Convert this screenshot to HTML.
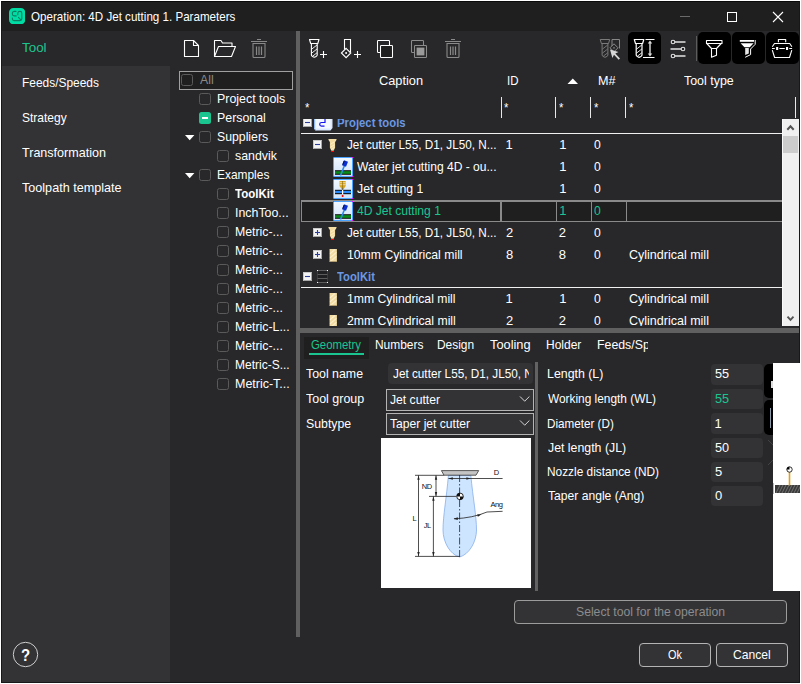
<!DOCTYPE html>
<html><head><meta charset="utf-8"><title>Operation: 4D Jet cutting 1. Parameters</title>
<style>
html,body{margin:0;padding:0;background:#fff;}
body{width:801px;height:684px;position:relative;overflow:hidden;font-family:"Liberation Sans",sans-serif;font-size:13px;}
.r{position:absolute;display:block;box-sizing:border-box;}
.t{position:absolute;display:block;white-space:nowrap;line-height:16px;transform-origin:0 50%;}
.clip{position:absolute;overflow:hidden;}
</style></head><body>
<div class="r" style="left:1px;top:1px;width:799px;height:682px;background:#28282a;"></div>
<div class="r" style="left:1px;top:1px;width:799px;height:30px;background:#1f1f1f;"></div>
<div class="r" style="left:1px;top:31px;width:169px;height:652px;background:#333335;"></div>
<div class="r" style="left:1px;top:31px;width:169px;height:35px;background:#28282a;"></div>
<svg class="r" style="left:9px;top:8px;" width="16" height="16" viewBox="0 0 16 16"><rect x="0" y="0" width="16.2" height="16.2" rx="4.4" fill="#00dca3"/>
<g fill="none" stroke="#0a7f63" stroke-width="1.1" stroke-linecap="round"><path d="M7 3.400H5.200a1.800 1.800 0 0 0-1.800 1.800v0.900a1.800 1.800 0 0 0 1.800 1.800H7.200"/><path d="M3.400 10v0.800a1.800 1.800 0 0 0 1.800 1.800h5.800a1.800 1.800 0 0 0 1.800-1.800V5.200a1.800 1.800 0 0 0-1.800-1.800h-0.400a1.800 1.800 0 0 0-1.800 1.800v1.600"/><path d="M9.500 9.300l2.100 2.300"/></g></svg>
<span class="t" style="left:31.06px;top:8.70px;color:#fff;transform:scaleX(0.8921);">Operation: 4D Jet cutting 1. Parameters</span>
<div class="r" style="left:680px;top:16px;width:10px;height:1px;background:#6a6a6a;"></div>
<div class="r" style="left:727px;top:12px;width:10px;height:10px;background:transparent;border:1px solid #fff;"></div>
<svg class="r" style="left:772px;top:11px;" width="12" height="12" viewBox="0 0 12 12"><path d="M1 1L11 11M11 1L1 11" stroke="#fff" stroke-width="1.1" fill="none"/></svg>
<span class="t" style="left:22.29px;top:39.70px;color:#1bc590;transform:scaleX(1.0308);">Tool</span>
<span class="t" style="left:21.59px;top:74.70px;color:#fff;transform:scaleX(0.9173);">Feeds/Speeds</span>
<span class="t" style="left:22.05px;top:109.70px;color:#fff;transform:scaleX(0.9226);">Strategy</span>
<span class="t" style="left:22.31px;top:144.70px;color:#fff;transform:scaleX(0.9650);">Transformation</span>
<span class="t" style="left:22.31px;top:179.70px;color:#fff;transform:scaleX(0.9695);">Toolpath template</span>
<svg class="r" style="left:12px;top:641px;" width="27" height="27" viewBox="0 0 27 27"><circle cx="13.500" cy="13.500" r="12.200" fill="none" stroke="#cdcdcd" stroke-width="1"/></svg>
<span class="t" style="left:20.51px;top:646.75px;color:#fff;font-size:16.5px;font-weight:bold;transform:scaleX(0.9073);">?</span>
<svg class="r" style="left:182px;top:38px;" width="20" height="22" viewBox="0 0 20 22"><path d="M2.500 2.500h9l5 5v11h-14zM11.500 2.500v5h5" fill="none" stroke="#fff" stroke-width="1.100" stroke-linejoin="round"/></svg>
<svg class="r" style="left:212px;top:38px;" width="26" height="22" viewBox="0 0 26 22"><path d="M2.500 18.500v-16h6.500l1.500 2.500h9.500v3.500M2.500 18.500l4-10h17l-4 10z" fill="none" stroke="#fff" stroke-width="1.100" stroke-linejoin="round"/></svg>
<svg class="r" style="left:249px;top:36px;" width="20" height="24" viewBox="0 0 20 24"><path d="M2 5.500h16M8 3.500h4M4 7.500h12v13q0 1-1 1h-10q-1 0-1-1z" fill="none" stroke="#888" stroke-width="1.100"/><path d="M7.500 10.500v8.500M10 10.500v8.500M12.500 10.500v8.500" stroke="#888" stroke-width="1.200"/></svg>
<div class="r" style="left:179px;top:71px;width:114px;height:19px;background:#1f1f1f;border:1px solid #a0a0a0;"></div>
<div class="r" style="left:181px;top:74px;width:12px;height:12px;background:transparent;border:1px solid #5a5a5a;border-radius:2.5px;"></div>
<span class="t" style="left:200.2px;top:71.70px;color:#8a8a8a;transform:scaleX(0.9412);">All</span>
<div class="r" style="left:199px;top:93px;width:12px;height:12px;background:transparent;border:1px solid #5a5a5a;border-radius:2.5px;"></div>
<span class="t" style="left:217.05px;top:90.70px;color:#fff;transform:scaleX(0.9542);">Project tools</span>
<div class="r" style="left:199px;top:112px;width:12px;height:12px;background:#1bc590;border-radius:2.5px;"></div>
<div class="r" style="left:202px;top:117px;width:6px;height:2px;background:#fff;"></div>
<span class="t" style="left:217.05px;top:109.70px;color:#fff;transform:scaleX(0.9513);">Personal</span>
<div class="r" style="left:199px;top:131px;width:12px;height:12px;background:transparent;border:1px solid #5a5a5a;border-radius:2.5px;"></div>
<span class="t" style="left:216.83px;top:128.70px;color:#fff;transform:scaleX(0.9435);">Suppliers</span>
<svg class="r" style="left:185px;top:135px;" width="10" height="6" viewBox="0 0 10 6"><path d="M0 0h9.4L4.7 5.2z" fill="#fff"/></svg>
<div class="r" style="left:217px;top:150px;width:12px;height:12px;background:transparent;border:1px solid #5a5a5a;border-radius:2.5px;"></div>
<span class="t" style="left:235.02px;top:147.70px;color:#fff;transform:scaleX(0.9519);">sandvik</span>
<div class="r" style="left:199px;top:169px;width:12px;height:12px;background:transparent;border:1px solid #5a5a5a;border-radius:2.5px;"></div>
<span class="t" style="left:217.09px;top:166.70px;color:#fff;transform:scaleX(0.9171);">Examples</span>
<svg class="r" style="left:185px;top:173px;" width="10" height="6" viewBox="0 0 10 6"><path d="M0 0h9.4L4.7 5.2z" fill="#fff"/></svg>
<div class="r" style="left:217px;top:188px;width:12px;height:12px;background:transparent;border:1px solid #5a5a5a;border-radius:2.5px;"></div>
<span class="t" style="left:235.31px;top:185.70px;color:#fff;font-weight:bold;transform:scaleX(0.8853);">ToolKit</span>
<div class="r" style="left:217px;top:207px;width:12px;height:12px;background:transparent;border:1px solid #5a5a5a;border-radius:2.5px;"></div>
<span class="t" style="left:234.96px;top:204.70px;color:#fff;transform:scaleX(0.9519);">InchToo...</span>
<div class="r" style="left:217px;top:226px;width:12px;height:12px;background:transparent;border:1px solid #5a5a5a;border-radius:2.5px;"></div>
<span class="t" style="left:235.06px;top:223.70px;color:#fff;transform:scaleX(0.9461);">Metric-...</span>
<div class="r" style="left:217px;top:245px;width:12px;height:12px;background:transparent;border:1px solid #5a5a5a;border-radius:2.5px;"></div>
<span class="t" style="left:235.06px;top:242.70px;color:#fff;transform:scaleX(0.9461);">Metric-...</span>
<div class="r" style="left:217px;top:264px;width:12px;height:12px;background:transparent;border:1px solid #5a5a5a;border-radius:2.5px;"></div>
<span class="t" style="left:235.06px;top:261.70px;color:#fff;transform:scaleX(0.9461);">Metric-...</span>
<div class="r" style="left:217px;top:283px;width:12px;height:12px;background:transparent;border:1px solid #5a5a5a;border-radius:2.5px;"></div>
<span class="t" style="left:235.06px;top:280.70px;color:#fff;transform:scaleX(0.9461);">Metric-...</span>
<div class="r" style="left:217px;top:302px;width:12px;height:12px;background:transparent;border:1px solid #5a5a5a;border-radius:2.5px;"></div>
<span class="t" style="left:235.06px;top:299.70px;color:#fff;transform:scaleX(0.9461);">Metric-...</span>
<div class="r" style="left:217px;top:321px;width:12px;height:12px;background:transparent;border:1px solid #5a5a5a;border-radius:2.5px;"></div>
<span class="t" style="left:235.06px;top:318.70px;color:#fff;transform:scaleX(0.9459);">Metric-L...</span>
<div class="r" style="left:217px;top:340px;width:12px;height:12px;background:transparent;border:1px solid #5a5a5a;border-radius:2.5px;"></div>
<span class="t" style="left:235.06px;top:337.70px;color:#fff;transform:scaleX(0.9461);">Metric-...</span>
<div class="r" style="left:217px;top:359px;width:12px;height:12px;background:transparent;border:1px solid #5a5a5a;border-radius:2.5px;"></div>
<span class="t" style="left:235.09px;top:356.70px;color:#fff;transform:scaleX(0.9227);">Metric-S...</span>
<div class="r" style="left:217px;top:378px;width:12px;height:12px;background:transparent;border:1px solid #5a5a5a;border-radius:2.5px;"></div>
<span class="t" style="left:235.04px;top:375.70px;color:#fff;transform:scaleX(0.9598);">Metric-T...</span>
<div class="r" style="left:296px;top:31px;width:4px;height:606px;background:#606060;"></div>
<svg class="r" style="left:300px;top:32px;" width="34" height="32" viewBox="0 0 34 32"><g transform="translate(9,7)" fill="none" stroke="#fff" stroke-width="1.1" stroke-linejoin="round"><path d="M0.5 0.5h9.5l-1.200 4h-7.100zM2.400 4.500v11.600q0 1.400 2.900 2.200q2.900-0.800 2.900-2.200v-11.600"/><path d="M2.600 10.200l5.400-4.200M2.600 14.200l5.400-4.200M3.600 17.200l4.400-3.400" stroke-width="0.9"/></g><path d="M20.0 22.5h7M23.5 19.0v7" stroke="#fff" stroke-width="1.1" fill="none"/></svg>
<svg class="r" style="left:334px;top:32px;" width="34" height="32" viewBox="0 0 34 32"><g fill="none" stroke="#fff" stroke-width="1.1"><path d="M10.5 17.500v-10h6v12.500"/><path d="M12.1 16.300l4.700 4.700-4.700 4.700-4.700-4.700z"/><circle cx="12.1" cy="21" r="1" fill="#fff" stroke="none"/></g><path d="M20.0 22.5h7M23.5 19.0v7" stroke="#fff" stroke-width="1.1" fill="none"/></svg>
<svg class="r" style="left:374px;top:38px;" width="22" height="22" viewBox="0 0 22 22"><g fill="#28282a" stroke="#fff" stroke-width="1.05"><rect x="3.5" y="2.5" width="12" height="12" rx="0.8"/><rect x="6.5" y="7.5" width="12" height="12" rx="0.8" fill="#1f1f1f"/></g></svg>
<svg class="r" style="left:408px;top:38px;" width="22" height="22" viewBox="0 0 22 22"><g fill="#28282a" stroke="#8c8c8c" stroke-width="1.05"><rect x="3.5" y="2.5" width="12" height="12" rx="0.8"/><rect x="6.5" y="7.5" width="12" height="12" rx="0.8"/><rect x="8.6" y="9.6" width="7.8" height="7.8" fill="#9a9a9a" stroke="none"/></g></svg>
<svg class="r" style="left:443px;top:36px;" width="20" height="24" viewBox="0 0 20 24"><path d="M2 5.500h16M8 3.500h4M4 7.500h12v13q0 1-1 1h-10q-1 0-1-1z" fill="none" stroke="#8a8a8a" stroke-width="1.100"/><path d="M7.500 10.500v8.500M10 10.500v8.500M12.500 10.500v8.500" stroke="#8a8a8a" stroke-width="1.200"/></svg>
<svg class="r" style="left:596px;top:32px;" width="30" height="32" viewBox="0 0 30 32"><g transform="translate(3.7,7)" fill="none" stroke="#7a7a7a" stroke-width="1.0" stroke-linejoin="round"><path d="M0.5 0.5h9.5l-1.200 4h-7.100zM2.400 4.500v11.600q0 1.400 2.900 2.200q2.900-0.800 2.900-2.200v-11.600"/><path d="M2.600 10.200l5.400-4.200M2.600 14.200l5.400-4.200M3.600 17.200l4.400-3.400" stroke-width="0.9"/></g><g fill="none" stroke="#888" stroke-width="1"><path d="M16 14v-6.5h7.5v9"/><path d="M18 11.8l4 4-4 4-4-4z"/><circle cx="18" cy="15.8" r="0.9" fill="#7a7a7a" stroke="none"/></g><path d="M14 17.5l8.5 2.6-3.2 1.5 4.7 5-1.3 1.2-4.7-5-1.6 3.2z" fill="#d6d6d6"/></svg>
<div class="r" style="left:628px;top:32px;width:33px;height:32px;background:#000;border-radius:5px;"></div>
<svg class="r" style="left:628px;top:32px;" width="33" height="32" viewBox="0 0 33 32"><g transform="translate(5.8,7)" fill="none" stroke="#fff" stroke-width="1.2" stroke-linejoin="round"><path d="M0.5 0.5h9.5l-1.200 4h-7.100zM2.400 4.500v11.600q0 1.400 2.900 2.200q2.900-0.800 2.900-2.200v-11.600"/><path d="M2.600 10.200l5.400-4.200M2.600 14.200l5.400-4.200M3.600 17.200l4.400-3.400" stroke-width="0.9"/></g><g stroke="#fff" stroke-width="1.1" fill="none"><path d="M17.5 7.5h9M15 25.5h11.5"/><path d="M22 11v11.5" stroke="#b0b0b0" stroke-width="1.8"/><path d="M22 8.6l2.2 3h-4.4zM22 24.4l2.2-3h-4.4z" fill="#ddd" stroke="none"/></g></svg>
<svg class="r" style="left:666px;top:36px;" width="28" height="26" viewBox="0 0 28 26"><g stroke="#b4b4b4" stroke-width="1.8"><path d="M9 6h10.5M4.5 13h10.5M9 20h10.5"/></g><g fill="#28282a" stroke="#e4e4e4" stroke-width="1.1"><circle cx="7" cy="6" r="1.8"/><circle cx="17" cy="13" r="1.8"/><circle cx="7" cy="20" r="1.8"/></g></svg>
<div class="r" style="left:696px;top:36px;width:1px;height:25px;background:#5c5c5c;"></div>
<div class="r" style="left:698px;top:32px;width:33px;height:32px;background:#000;border-radius:5px;"></div>
<svg class="r" style="left:698px;top:32px;" width="33" height="32" viewBox="0 0 33 32"><path d="M8.500 8.500h15.500v3h-15.500zM8.800 11.500l4.700 5v8.800l5-2v-6.800l4.700-5M13.500 16.500h5" fill="none" stroke="#fff" stroke-width="1.100" stroke-linejoin="round"/></svg>
<div class="r" style="left:732px;top:32px;width:33px;height:32px;background:#000;border-radius:5px;"></div>
<svg class="r" style="left:732px;top:32px;" width="33" height="32" viewBox="0 0 33 32"><path d="M7.800 8h14.200v1.800h-14.200z" fill="#fff"/><path d="M8.600 11.200h13l-3.800 4h-5.300z" fill="#fff"/><path d="M13.200 16h3.600v5.600l-3.600 1.400z" fill="#e8e8e8"/><path d="M23.200 8v4.300l-4.600 4.700v5.600l-5.400 2.700" fill="none" stroke="#fff" stroke-width="1"/></svg>
<div class="r" style="left:766px;top:32px;width:33px;height:32px;background:#000;border-radius:5px;"></div>
<svg class="r" style="left:766px;top:32px;" width="33" height="32" viewBox="0 0 33 32"><g fill="none" stroke="#fff" stroke-width="1.100" stroke-linejoin="round"><path d="M12.400 10.200v-2.700h7.300v2.700"/><path d="M6.300 14.800l2.200-3.300h15.200l2.200 3.300"/><path d="M6.300 18.200l2.300 7.300h14.900l2.300-7.300"/><path d="M6 16.500h2.800M13.400 16.500h5.400M23.300 16.500h2.800"/></g><rect x="10.100" y="15" width="2.100" height="3" fill="#fff"/><rect x="20" y="15" width="2.100" height="3" fill="#fff"/></svg>
<span class="t" style="left:378.71px;top:72.70px;color:#fff;transform:scaleX(0.9838);">Caption</span>
<span class="t" style="left:507.24px;top:72.70px;color:#fff;transform:scaleX(0.8839);">ID</span>
<svg class="r" style="left:567px;top:78px;" width="12" height="7" viewBox="0 0 12 7"><path d="M0.5 6L5.8 0.6 11 6z" fill="#fff"/></svg>
<span class="t" style="left:597.53px;top:72.70px;color:#fff;transform:scaleX(0.9704);">M#</span>
<span class="t" style="left:684.31px;top:72.70px;color:#fff;transform:scaleX(0.9551);">Tool type</span>
<div class="r" style="left:501px;top:97px;width:1px;height:21px;background:#e8e8e8;"></div>
<div class="r" style="left:555px;top:97px;width:1px;height:21px;background:#e8e8e8;"></div>
<div class="r" style="left:590px;top:97px;width:1px;height:21px;background:#e8e8e8;"></div>
<div class="r" style="left:625px;top:97px;width:1px;height:21px;background:#e8e8e8;"></div>
<div class="r" style="left:795px;top:97px;width:1px;height:21px;background:#e8e8e8;"></div>
<span class="t" style="left:304.63px;top:99.70px;color:#fff;transform:scaleX(0.8696);">*</span>
<span class="t" style="left:503.63px;top:99.70px;color:#fff;transform:scaleX(0.8696);">*</span>
<span class="t" style="left:558.63px;top:99.70px;color:#fff;transform:scaleX(0.8696);">*</span>
<span class="t" style="left:593.63px;top:99.70px;color:#fff;transform:scaleX(0.8696);">*</span>
<span class="t" style="left:628.63px;top:99.70px;color:#fff;transform:scaleX(0.8696);">*</span>
<div class="clip" style="left:301px;top:119px;width:481px;height:207px;">
<svg class="r" style="left:2px;top:-1px;" width="9" height="9" viewBox="0 0 9 9"><rect x="0" y="0" width="9" height="9" fill="#c9c9c9"/><rect x="1" y="1" width="7" height="7" fill="#f4f4f4"/><path d="M0.500 8.500h8v-8" stroke="#a8a8a8" fill="none"/><path d="M2 4.500h5" stroke="#2e3f9a" stroke-width="1.100"/></svg>
<svg class="r" style="left:12px;top:-2px;" width="20" height="14" viewBox="0 0 20 14"><path d="M1 0h18.500v11l-2 2.500h-15l-1.500-2z" fill="#dbe9ff"/><path d="M3 0h14.500v11.500h-14.500z" fill="#f4f8ff"/><path d="M1.500 0v11.500l1.500 2" stroke="#8fb8f5" fill="none"/><path d="M12 2v3.500h-3.500q-1.800 0-1.800 1.800t1.800 1.800h3" fill="none" stroke="#1414f0" stroke-width="1.200"/></svg>
<span class="t" style="left:35.92px;top:-4.30px;color:#6a98e4;font-weight:bold;transform:scaleX(0.8719);">Project tools</span>
<div class="r" style="left:0px;top:13.699999999999989px;width:481px;height:1.8px;background:#f0f0f0;"></div>
<div class="r" style="left:0px;top:81px;width:481px;height:22px;background:#1f1f1f;"></div>
<div class="r" style="left:0px;top:81px;width:481px;height:1.5px;background:#8a8a8a;"></div>
<div class="r" style="left:0px;top:101.5px;width:481px;height:1.5px;background:#8a8a8a;"></div>
<div class="r" style="left:0px;top:81px;width:1px;height:22px;background:#8a8a8a;"></div>
<div class="r" style="left:199.2px;top:81px;width:1.6px;height:22px;background:#8a8a8a;"></div>
<div class="r" style="left:254.79999999999995px;top:81px;width:1.6px;height:22px;background:#8a8a8a;"></div>
<div class="r" style="left:289.6px;top:81px;width:1.6px;height:22px;background:#8a8a8a;"></div>
<div class="r" style="left:324.6px;top:81px;width:1.6px;height:22px;background:#8a8a8a;"></div>
<svg class="r" style="left:12px;top:21px;" width="9" height="9" viewBox="0 0 9 9"><rect x="0" y="0" width="9" height="9" fill="#c9c9c9"/><rect x="1" y="1" width="7" height="7" fill="#f4f4f4"/><path d="M0.500 8.500h8v-8" stroke="#a8a8a8" fill="none"/><path d="M2 4.500h5" stroke="#2e3f9a" stroke-width="1.100"/></svg>
<svg class="r" style="left:26.600000000000023px;top:20px;" width="9" height="13" viewBox="0 0 9 13"><path d="M0.300 0h8.400l-0.900 2.600h-0.700v6.200l-1.500 2.900h-2.200l-1.500-2.900v-6.200h-0.700z" fill="#f3dca2"/><path d="M2.600 5.200l3.800-2.400M2.600 8.200l3.800-2.400M3 10.600l3.200-2" stroke="#fbefcf" stroke-width="0.900"/><rect x="3" y="12" width="3" height="1.100" fill="#f00"/></svg>
<span class="t" style="left:45.92px;top:17.70px;color:#fff;transform:scaleX(0.9037);">Jet cutter L55, D1, JL50, N...</span>
<span class="t" style="left:204.5px;top:17.70px;color:#fff;">1</span>
<span class="t" style="left:258.3px;top:17.70px;color:#fff;">1</span>
<span class="t" style="left:293.43px;top:17.70px;color:#fff;transform:scaleX(0.9355);">0</span>
<svg class="r" style="left:32px;top:38px;" width="20" height="20" viewBox="0 0 20 20"><defs><linearGradient id="g157" x1="0" y1="0" x2="0" y2="1"><stop offset="0" stop-color="#f2f8ff"/><stop offset="1" stop-color="#cfe2fa"/></linearGradient></defs><rect x="0.5" y="0.5" width="19" height="19" fill="url(#g157)" stroke="#4aa3ff"/><rect x="0" y="0" width="1" height="1" fill="#f0f"/><rect x="19" y="0" width="1" height="1" fill="#f0f"/><rect x="0" y="19" width="1" height="1" fill="#f0f"/><rect x="19" y="19" width="1" height="1" fill="#f0f"/><rect x="2" y="13.200" width="16" height="4.600" fill="#111"/><rect x="2" y="14.200" width="16" height="2.600" fill="#0a8a1a"/><path d="M7.500 18.500l4-10" stroke="#2a8be8" stroke-width="1.600"/><path d="M11 3.200l4 1.600-2 5-4-1.600z" fill="#0a2fd0"/><path d="M11.200 4l-1.400 3.600" stroke="#111" stroke-width="1"/></svg>
<span class="t" style="left:56.01px;top:39.70px;color:#fff;transform:scaleX(0.9269);">Water jet cutting 4D - ou...</span>
<span class="t" style="left:258.3px;top:39.70px;color:#fff;">1</span>
<span class="t" style="left:293.43px;top:39.70px;color:#fff;transform:scaleX(0.9355);">0</span>
<svg class="r" style="left:32px;top:60px;" width="20" height="20" viewBox="0 0 20 20"><defs><linearGradient id="g179" x1="0" y1="0" x2="0" y2="1"><stop offset="0" stop-color="#f2f8ff"/><stop offset="1" stop-color="#cfe2fa"/></linearGradient></defs><rect x="0.5" y="0.5" width="19" height="19" fill="url(#g179)" stroke="#4aa3ff"/><rect x="0" y="0" width="1" height="1" fill="#f0f"/><rect x="19" y="0" width="1" height="1" fill="#f0f"/><rect x="0" y="19" width="1" height="1" fill="#f0f"/><rect x="19" y="19" width="1" height="1" fill="#f0f"/><path d="M6.500 2h6.200v5l-2.400 3.500h-1.400l-2.400-3.500z" fill="#d9a520"/><path d="M6.500 3.700h6.200M6.500 5.700h6.200" stroke="#f6e6b0" stroke-width="0.800"/><path d="M9.600 2v8" stroke="#8a6a10" stroke-width="0.700"/><path d="M9.600 9.500v5" stroke="#555" stroke-width="1"/><rect x="2" y="10.800" width="16" height="4.400" fill="#111"/><rect x="2" y="11.800" width="16" height="2.300" fill="#2a8bff"/><rect x="9" y="10.800" width="1.200" height="4.400" fill="#fff"/><rect x="8.800" y="16" width="1.600" height="2" fill="#f00"/></svg>
<span class="t" style="left:55.91px;top:61.70px;color:#fff;transform:scaleX(0.9466);">Jet cutting 1</span>
<span class="t" style="left:258.3px;top:61.70px;color:#fff;">1</span>
<span class="t" style="left:293.43px;top:61.70px;color:#fff;transform:scaleX(0.9355);">0</span>
<svg class="r" style="left:32px;top:82px;" width="20" height="20" viewBox="0 0 20 20"><defs><linearGradient id="g201" x1="0" y1="0" x2="0" y2="1"><stop offset="0" stop-color="#f2f8ff"/><stop offset="1" stop-color="#cfe2fa"/></linearGradient></defs><rect x="0.5" y="0.5" width="19" height="19" fill="url(#g201)" stroke="#4aa3ff"/><rect x="0" y="0" width="1" height="1" fill="#f0f"/><rect x="19" y="0" width="1" height="1" fill="#f0f"/><rect x="0" y="19" width="1" height="1" fill="#f0f"/><rect x="19" y="19" width="1" height="1" fill="#f0f"/><rect x="2" y="13.200" width="16" height="4.600" fill="#111"/><rect x="2" y="14.200" width="16" height="2.600" fill="#0a8a1a"/><path d="M7.500 18.500l4-10" stroke="#2a8be8" stroke-width="1.600"/><path d="M11 3.200l4 1.600-2 5-4-1.600z" fill="#0a2fd0"/><path d="M11.200 4l-1.400 3.600" stroke="#111" stroke-width="1"/></svg>
<span class="t" style="left:55.82px;top:83.70px;color:#1bc590;transform:scaleX(0.9284);">4D Jet cutting 1</span>
<span class="t" style="left:258.3px;top:83.70px;color:#1bc590;">1</span>
<span class="t" style="left:293.43px;top:83.70px;color:#1bc590;transform:scaleX(0.9355);">0</span>
<svg class="r" style="left:12px;top:109px;" width="9" height="9" viewBox="0 0 9 9"><rect x="0" y="0" width="9" height="9" fill="#c9c9c9"/><rect x="1" y="1" width="7" height="7" fill="#f4f4f4"/><path d="M0.500 8.500h8v-8" stroke="#a8a8a8" fill="none"/><path d="M2 4.500h5" stroke="#2e3f9a" stroke-width="1.100"/><path d="M4.500 2v5" stroke="#2e3f9a" stroke-width="1.100"/></svg>
<svg class="r" style="left:26.600000000000023px;top:108px;" width="9" height="13" viewBox="0 0 9 13"><path d="M0.300 0h8.400l-0.900 2.600h-0.700v6.200l-1.500 2.900h-2.200l-1.500-2.900v-6.200h-0.700z" fill="#f3dca2"/><path d="M2.600 5.200l3.800-2.400M2.600 8.200l3.800-2.400M3 10.600l3.200-2" stroke="#fbefcf" stroke-width="0.900"/><rect x="3" y="12" width="3" height="1.100" fill="#f00"/></svg>
<span class="t" style="left:45.92px;top:105.70px;color:#fff;transform:scaleX(0.9037);">Jet cutter L55, D1, JL50, N...</span>
<span class="t" style="left:204.9px;top:105.70px;color:#fff;">2</span>
<span class="t" style="left:257.7px;top:105.70px;color:#fff;">2</span>
<span class="t" style="left:293.43px;top:105.70px;color:#fff;transform:scaleX(0.9355);">0</span>
<svg class="r" style="left:12px;top:131px;" width="9" height="9" viewBox="0 0 9 9"><rect x="0" y="0" width="9" height="9" fill="#c9c9c9"/><rect x="1" y="1" width="7" height="7" fill="#f4f4f4"/><path d="M0.500 8.500h8v-8" stroke="#a8a8a8" fill="none"/><path d="M2 4.500h5" stroke="#2e3f9a" stroke-width="1.100"/><path d="M4.500 2v5" stroke="#2e3f9a" stroke-width="1.100"/></svg>
<svg class="r" style="left:28px;top:130px;" width="9" height="13" viewBox="0 0 9 13"><rect x="0.300" y="0" width="7.600" height="13" fill="#f3dca2"/><path d="M0.800 9l6.600-5.600M0.800 13l6.600-5.600M0.800 5l5-4.500" stroke="#fbefcf" stroke-width="1.100"/><path d="M0.400 0v12.800h7.500" stroke="#6a5a3a" stroke-width="0.700" fill="none"/></svg>
<span class="t" style="left:46.36px;top:127.70px;color:#fff;transform:scaleX(0.9413);">10mm Cylindrical mill</span>
<span class="t" style="left:204.9px;top:127.70px;color:#fff;">8</span>
<span class="t" style="left:257.7px;top:127.70px;color:#fff;">8</span>
<span class="t" style="left:293.43px;top:127.70px;color:#fff;transform:scaleX(0.9355);">0</span>
<span class="t" style="left:328.03px;top:127.70px;color:#fff;transform:scaleX(0.9620);">Cylindrical mill</span>
<svg class="r" style="left:2px;top:153px;" width="9" height="9" viewBox="0 0 9 9"><rect x="0" y="0" width="9" height="9" fill="#c9c9c9"/><rect x="1" y="1" width="7" height="7" fill="#f4f4f4"/><path d="M0.500 8.500h8v-8" stroke="#a8a8a8" fill="none"/><path d="M2 4.500h5" stroke="#2e3f9a" stroke-width="1.100"/></svg>
<svg class="r" style="left:16px;top:151px;" width="11" height="13" viewBox="0 0 11 13"><rect x="0.500" y="0.500" width="10" height="12" fill="#202022"/><path d="M0.500 0.500h10M0.500 4.500h10M0.500 8.500h10M0.500 12.500h10" stroke="#5c5c5c" stroke-width="1"/><path d="M0.500 0.500v12M10.500 0.500v12" stroke="#505050" stroke-width="1" stroke-dasharray="1 1"/><path d="M0 0h1v1h-1zM10 0h1v1h-1zM0 12h1v1h-1zM10 12h1v1h-1z" fill="#f4f4f4"/></svg>
<span class="t" style="left:36.01px;top:149.70px;color:#6a98e4;font-weight:bold;transform:scaleX(0.8647);">ToolKit</span>
<div class="r" style="left:0px;top:167.7px;width:481px;height:1.8px;background:#f0f0f0;"></div>
<svg class="r" style="left:28px;top:174px;" width="9" height="13" viewBox="0 0 9 13"><rect x="0.300" y="0" width="7.600" height="13" fill="#f3dca2"/><path d="M0.800 9l6.600-5.600M0.800 13l6.600-5.600M0.800 5l5-4.500" stroke="#fbefcf" stroke-width="1.100"/><path d="M0.400 0v12.800h7.500" stroke="#6a5a3a" stroke-width="0.700" fill="none"/></svg>
<span class="t" style="left:46.36px;top:171.70px;color:#fff;transform:scaleX(0.9393);">1mm Cylindrical mill</span>
<span class="t" style="left:204.5px;top:171.70px;color:#fff;">1</span>
<span class="t" style="left:258.3px;top:171.70px;color:#fff;">1</span>
<span class="t" style="left:293.43px;top:171.70px;color:#fff;transform:scaleX(0.9355);">0</span>
<span class="t" style="left:328.03px;top:171.70px;color:#fff;transform:scaleX(0.9620);">Cylindrical mill</span>
<svg class="r" style="left:28px;top:196px;" width="9" height="13" viewBox="0 0 9 13"><rect x="0.300" y="0" width="7.600" height="13" fill="#f3dca2"/><path d="M0.800 9l6.600-5.600M0.800 13l6.600-5.600M0.800 5l5-4.500" stroke="#fbefcf" stroke-width="1.100"/><path d="M0.400 0v12.800h7.500" stroke="#6a5a3a" stroke-width="0.700" fill="none"/></svg>
<span class="t" style="left:46.14px;top:193.70px;color:#fff;transform:scaleX(0.9413);">2mm Cylindrical mill</span>
<span class="t" style="left:204.9px;top:193.70px;color:#fff;">2</span>
<span class="t" style="left:257.7px;top:193.70px;color:#fff;">2</span>
<span class="t" style="left:293.43px;top:193.70px;color:#fff;transform:scaleX(0.9355);">0</span>
<span class="t" style="left:328.03px;top:193.70px;color:#fff;transform:scaleX(0.9620);">Cylindrical mill</span>
</div>
<div class="r" style="left:782px;top:119px;width:17px;height:207px;background:#f0f0f0;border-left:1px solid #fbfbfb;"></div>
<div class="r" style="left:783px;top:136px;width:15px;height:17px;background:#cdcdcd;"></div>
<svg class="r" style="left:785px;top:123px;" width="11" height="9" viewBox="0 0 11 9"><path d="M2.300 6.700l3.200-3.400 3.200 3.400" fill="none" stroke="#555" stroke-width="2"/></svg>
<svg class="r" style="left:785px;top:313px;" width="11" height="9" viewBox="0 0 11 9"><path d="M2.500 3.600l3 3.200 3-3.200" fill="none" stroke="#555" stroke-width="1.900"/></svg>
<div class="r" style="left:300px;top:328px;width:500px;height:5px;background:#606060;"></div>
<div class="r" style="left:304px;top:337px;width:65px;height:22px;background:#1f1f1f;"></div>
<span class="t" style="left:311.08px;top:336.70px;color:#1bc590;transform:scaleX(0.8743);">Geometry</span>
<div class="r" style="left:309px;top:353px;width:55px;height:2px;background:#1bc590;"></div>
<span class="t" style="left:375.09px;top:336.70px;color:#fff;transform:scaleX(0.9178);">Numbers</span>
<span class="t" style="left:437.19px;top:336.70px;color:#fff;transform:scaleX(0.9169);">Design</span>
<span class="t" style="left:489.7px;top:336.70px;color:#fff;transform:scaleX(0.9850);">Tooling</span>
<span class="t" style="left:545.89px;top:336.70px;color:#fff;transform:scaleX(0.9216);">Holder</span>
<div class="clip" style="left:590px;top:335px;width:58px;height:24px;">
<span class="t" style="left:6.56px;top:1.70px;color:#fff;transform:scaleX(0.9477);">Feeds/Speeds</span>
</div>
<span class="t" style="left:305.91px;top:365.70px;color:#fff;transform:scaleX(0.9509);">Tool name</span>
<div class="r" style="left:388px;top:363px;width:145px;height:21px;background:#333336;border-radius:4px;"></div>
<div class="clip" style="left:388px;top:363px;width:141px;height:21px;">
<span class="t" style="left:4.62px;top:2.70px;color:#fff;transform:scaleX(0.9044);">Jet cutter L55, D1, JL50, ND5</span>
</div>
<span class="t" style="left:305.91px;top:390.70px;color:#fff;transform:scaleX(0.9583);">Tool group</span>
<div class="r" style="left:386px;top:389px;width:148px;height:22px;background:#333336;border:1px solid #b4b4b4;"></div>
<span class="t" style="left:390.21px;top:391.70px;color:#fff;transform:scaleX(0.9358);">Jet cutter</span>
<svg class="r" style="left:519px;top:394px;" width="12" height="10" viewBox="0 0 12 10"><path d="M1 2.500l4.700 4.700 4.700-4.700" fill="none" stroke="#e6e6e6" stroke-width="0.9"/></svg>
<span class="t" style="left:305.63px;top:415.70px;color:#fff;transform:scaleX(0.9464);">Subtype</span>
<div class="r" style="left:386px;top:413px;width:148px;height:22px;background:#333336;border:1px solid #b4b4b4;"></div>
<span class="t" style="left:390.12px;top:415.70px;color:#fff;transform:scaleX(0.9310);">Taper jet cutter</span>
<svg class="r" style="left:519px;top:418px;" width="12" height="10" viewBox="0 0 12 10"><path d="M1 2.500l4.700 4.700 4.700-4.700" fill="none" stroke="#e6e6e6" stroke-width="0.9"/></svg>
<div class="r" style="left:535px;top:362px;width:3px;height:229px;background:#626262;"></div>
<span class="t" style="left:547.25px;top:365.90px;color:#fff;transform:scaleX(0.9511);">Length (L)</span>
<div class="r" style="left:711px;top:364px;width:52px;height:20.5px;background:#333336;border-radius:4px;"></div>
<span class="t" style="left:715.01px;top:366.20px;color:#fff;transform:scaleX(0.9776);">55</span>
<span class="t" style="left:548.21px;top:391.30px;color:#fff;transform:scaleX(0.9130);">Working length (WL)</span>
<div class="r" style="left:711px;top:388.5px;width:52px;height:20.5px;background:#333336;border-radius:4px;"></div>
<span class="t" style="left:715.01px;top:391.20px;color:#1bc590;transform:scaleX(0.9776);">55</span>
<span class="t" style="left:547.31px;top:415.80px;color:#fff;transform:scaleX(0.8979);">Diameter (D)</span>
<div class="r" style="left:711px;top:413px;width:52px;height:20.5px;background:#333336;border-radius:4px;"></div>
<span class="t" style="left:714.5px;top:415.70px;color:#fff;">1</span>
<span class="t" style="left:548.11px;top:440.30px;color:#fff;transform:scaleX(0.9483);">Jet length (JL)</span>
<div class="r" style="left:711px;top:437.5px;width:52px;height:20.5px;background:#333336;border-radius:4px;"></div>
<span class="t" style="left:715.01px;top:440.20px;color:#fff;transform:scaleX(0.9776);">50</span>
<span class="t" style="left:547.3px;top:464.30px;color:#fff;transform:scaleX(0.9123);">Nozzle distance (ND)</span>
<div class="r" style="left:711px;top:461.5px;width:52px;height:20.5px;background:#333336;border-radius:4px;"></div>
<span class="t" style="left:715.0px;top:464.20px;color:#fff;">5</span>
<span class="t" style="left:548.02px;top:488.30px;color:#fff;transform:scaleX(0.9325);">Taper angle (Ang)</span>
<div class="r" style="left:711px;top:485.5px;width:52px;height:20.5px;background:#333336;border-radius:4px;"></div>
<span class="t" style="left:715.0px;top:488.20px;color:#fff;">0</span>
<div class="r" style="left:381px;top:438px;width:150px;height:150px;background:#fff;"></div>
<svg class="r" style="left:381px;top:438px;" width="150" height="150" viewBox="0 0 150 150"><path d="M67.400 37.500 L89.800 37.500 C92 60 95.500 78 95.500 92 C95.500 104 88 116.500 78.600 119 C69 116.500 62 104 62 92 C62 78 65.500 60 67.400 37.500z" fill="#cde5ff" stroke="#7aa6e8" stroke-width="0.700"/><path d="M60.400 32.600h37.300l-2.700 4.600h-32z" fill="#c4c4c4" stroke="#333" stroke-width="0.800"/><path d="M78.600 37v82" stroke="#222" stroke-width="0.800" stroke-dasharray="7 2 1.500 2"/><path d="M34 37.300h29M48 58.400h27M34 118.400h44.600M67.400 40.500h54.200" stroke="#222" stroke-width="0.800" fill="none"/><path d="M37.500 37.300v81M55 37.300v21M52.400 58.400v60" stroke="#222" stroke-width="0.800" fill="none"/><path d="M37.5 37.5l-1.2 4.2h2.4z" fill="#222"/><path d="M37.5 118.2l-1.2 -4.2h2.4z" fill="#222"/><path d="M55 37.5l-1.2 4.2h2.4z" fill="#222"/><path d="M55 58.2l-1.2 -4.2h2.4z" fill="#222"/><path d="M52.4 58.6l-1.2 4.2h2.4z" fill="#222"/><path d="M52.4 118.2l-1.2 -4.2h2.4z" fill="#222"/><path d="M67.6 40.5l4.2 -1.2v2.4z" fill="#222"/><path d="M89.6 40.5l-4.2 -1.2v2.4z" fill="#222"/><circle cx="79" cy="58.400" r="3.300" fill="#fff" stroke="#111" stroke-width="0.900"/><path d="M79 58.400v-3.300a3.300 3.300 0 0 0 -3.300 3.300zM79 58.400v3.300a3.300 3.300 0 0 0 3.300 -3.300z" fill="#111"/><path d="M73 80.800 Q92 80 106 74l15.600-0.700" stroke="#222" stroke-width="0.800" fill="none"/><path d="M72.600 80.800l4.200-1.500v2.600z" fill="#222"/><path d="M100.500 76.200l-3.600 2.600-0.800-2.200z" fill="#222"/><g font-family="Liberation Sans, sans-serif" font-size="7.500" fill="#111"><text x="112.800" y="37.400" textLength="5.600">D</text><text x="40.800" y="51" textLength="10.400">ND</text><text x="31.600" y="83" textLength="3.800">L</text><text x="42.800" y="90.300" textLength="7.400">JL</text><text x="109.600" y="69.300" textLength="12.200">Ang</text></g></svg>
<div class="r" style="left:514px;top:600px;width:273px;height:24px;background:#333336;border:1px solid #9c9c9c;border-radius:4px;"></div>
<span class="t" style="left:576.04px;top:603.70px;color:#8c8c8c;transform:scaleX(0.9378);">Select tool for the operation</span>
<div class="r" style="left:639px;top:643px;width:72px;height:24px;background:#333336;border:1px solid #b4b4b4;border-radius:4px;"></div>
<span class="t" style="left:668.1px;top:646.70px;color:#fff;transform:scaleX(0.8375);">Ok</span>
<div class="r" style="left:716px;top:643px;width:72px;height:24px;background:#333336;border:1px solid #b4b4b4;border-radius:4px;"></div>
<span class="t" style="left:732.95px;top:646.70px;color:#fff;transform:scaleX(0.9306);">Cancel</span>
<div class="r" style="left:1px;top:1px;width:799px;height:682px;background:transparent;border:1px solid #18181a;border-top-color:#0a0a0a;"></div>
<div class="r" style="left:773px;top:362.5px;width:28px;height:228.5px;background:#fff;"></div>
<div class="r" style="left:764px;top:364px;width:9px;height:34px;background:#000;border-radius:5px 0 0 5px;"></div>
<div class="r" style="left:764px;top:400px;width:9px;height:35px;background:#000;border-radius:5px 0 0 5px;"></div>
<div class="r" style="left:771px;top:381px;width:2px;height:7px;background:#ddd;"></div>
<div class="r" style="left:770px;top:408px;width:1px;height:20px;background:#8a9aa8;"></div>
<svg class="r" style="left:764px;top:436px;" width="36" height="62" viewBox="0 0 36 62"><path d="M4 4l5 5M4 29l5-5" stroke="#4a4a4a" stroke-width="0.800" fill="none"/><rect x="11" y="49" width="25" height="8" fill="#3a3a3a"/><path d="M12 57l4-8M15 57l4-8M18 57l4-8M21 57l4-8M24 57l4-8M27 57l4-8M30 57l4-8M33 57l4-8" stroke="#8a8a8a" stroke-width="0.700"/><path d="M25.500 36v13.500" stroke="#e0a020" stroke-width="1.600"/><circle cx="25.500" cy="33.500" r="2.700" fill="#fff" stroke="#000" stroke-width="0.800"/><path d="M25.500 33.500v-2.700a2.700 2.700 0 0 0 -2.700 2.700z" fill="#000"/><path d="M9.500 47v11" stroke="#9ab" stroke-width="0.800"/></svg>
</body></html>
